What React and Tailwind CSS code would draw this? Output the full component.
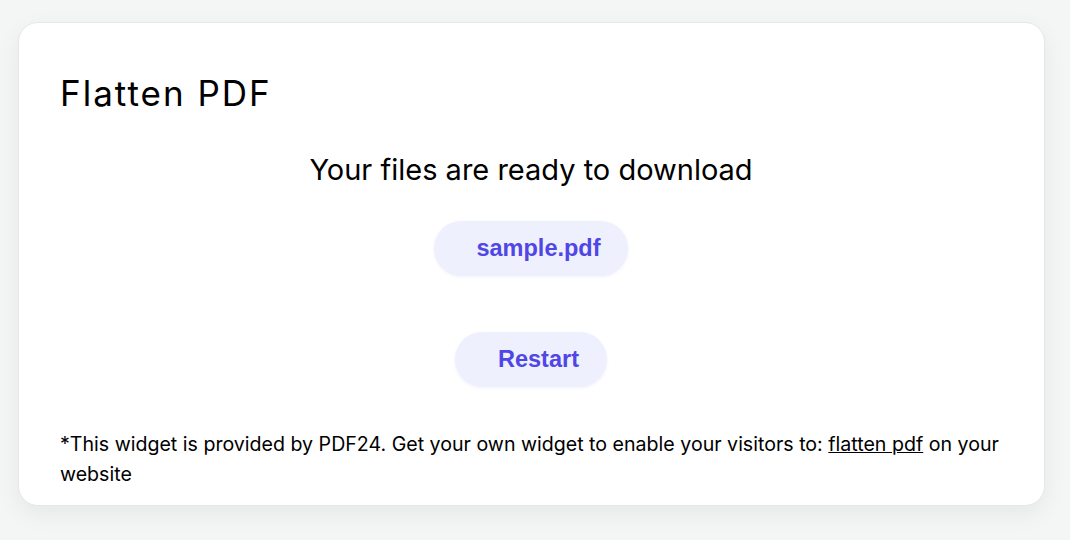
export default function App() {
  return (
    <div className="min-h-[540px] bg-[#f4f5f5] pl-[18px] pr-[25px] pt-[22px] font-['Inter',sans-serif]">
      <div className="rounded-[20px] border border-[#e6e7e8] bg-white pb-[16px] pl-[41px] pr-[42px] pt-[48px] shadow-[0_8px_24px_rgba(0,0,0,0.06)]">
        <h1 className="text-[35px] leading-[44px] tracking-[2px] text-black">Flatten PDF</h1>

        <div className="mt-[35px] flex flex-col items-center">
          <p className="text-[29px] leading-[40px] text-black">Your files are ready to download</p>

          <button className="mt-[31px] h-[55px] rounded-full bg-[#eef0fe] pl-[42px] pr-[27px] font-['Liberation_Sans',Arial,sans-serif] text-[23.5px] font-bold text-[#4f46e5] shadow-[0_1px_3px_rgba(79,70,229,0.08)]">
            sample.pdf
          </button>

          <button className="mt-[56px] h-[55px] rounded-full bg-[#eef0fe] pl-[43px] pr-[28px] font-['Liberation_Sans',Arial,sans-serif] text-[23.5px] font-bold text-[#4f46e5] shadow-[0_1px_3px_rgba(79,70,229,0.08)]">
            Restart
          </button>
        </div>

        <p className="mt-[42px] text-[19.6px] leading-[30px] text-black">
          *This widget is provided by PDF24. Get your own widget to enable your visitors to:{' '}
          <a href="#" className="underline">flatten pdf</a> on your website
        </p>
      </div>
    </div>
  )
}
